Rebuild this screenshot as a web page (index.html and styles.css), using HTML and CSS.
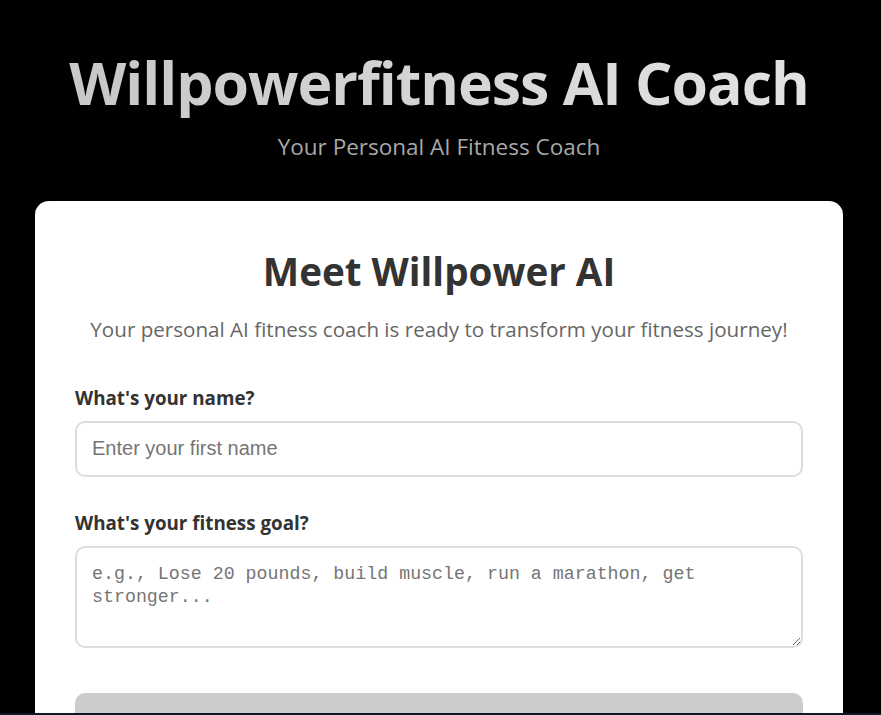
FILE: index.html
```html
<!DOCTYPE html>
<html lang="en">
<head>
<meta charset="utf-8">
<title>Willpowerfitness AI Coach</title>
<link rel="stylesheet" href="styles.css">
</head>
<body>
<div class="page">
  <header class="hero">
    <h1 class="hero-title">Willpowerfitness AI Coach</h1>
    <p class="hero-sub">Your Personal AI Fitness Coach</p>
  </header>
  <main class="card">
    <h2 class="card-title">Meet Willpower AI</h2>
    <p class="card-intro">Your personal AI fitness coach is ready to transform your fitness journey!</p>
    <div class="field">
      <label class="field-label" for="name">What's your name?</label>
      <input class="field-input" id="name" type="text" placeholder="Enter your first name">
    </div>
    <div class="field">
      <label class="field-label" for="goal">What's your fitness goal?</label>
      <textarea class="field-textarea" id="goal" rows="3" placeholder="e.g., Lose 20 pounds, build muscle, run a marathon, get stronger..."></textarea>
    </div>
    <button class="start-btn" type="button" disabled>Start My Fitness Journey</button>
  </main>
</div>
<div class="bottom-strip"></div>
</body>
</html>
```

FILE: styles.css
```css
* { box-sizing: border-box; }
html, body { margin: 0; padding: 0; }
body {
  background: #000;
  font-family: "Open Sans", "Noto Sans", sans-serif;
  overflow: hidden;
}
.page {
  padding: 0 38px 0 35px;
}
.hero {
  text-align: center;
  padding-top: 47px;
  padding-bottom: 39px;
}
.hero-title {
  margin: 0;
  font-size: 59px;
  font-weight: 700;
  line-height: 1.2;
  letter-spacing: -1.05px;
  background: linear-gradient(90deg, #c6c6c6, #e4e4e4);
  -webkit-background-clip: text;
  background-clip: text;
  color: transparent;
}
.hero-sub {
  margin: 13px 0 0;
  font-size: 22.5px;
  color: #a8a8a8;
}
.card {
  background: #fff;
  border-radius: 14px;
  padding: 45px 40px 40px;
  min-height: 600px;
}
.card-title {
  margin: 0;
  text-align: center;
  font-size: 38.6px;
  font-weight: 700;
  color: #333;
  line-height: 1.3;
}
.card-intro {
  margin: 19px 0 0;
  text-align: center;
  font-size: 20.6px;
  color: #666;
}
.field {
  margin-top: 42px;
  display: flex;
  flex-direction: column;
  gap: 10px;
}
.field + .field { margin-top: 33px; }
.field-label {
  font-size: 18.8px;
  font-weight: 700;
  color: #333;
}
.field-input,
.field-textarea {
  width: 100%;
  border: 2px solid #ddd;
  border-radius: 10px;
  background: #fff;
  color: #333;
  padding: 14px 15px;
  font-size: 20px;
}
.field-input {
  height: 56px;
  font-family: "Liberation Sans", Arial, sans-serif;
}
.field-textarea {
  height: 102px;
  font-family: "Liberation Mono", monospace;
  font-size: 18.3px;
  line-height: 23.5px;
  padding: 15px 15px 12px;
  resize: vertical;
}
.field-input::placeholder,
.field-textarea::placeholder { color: #757575; }
.start-btn {
  display: block;
  width: 100%;
  margin-top: 45px;
  height: 68px;
  border: none;
  border-radius: 10px;
  background: #ccc;
  color: #fff;
  font-size: 20px;
  line-height: 1.2;
  font-weight: 700;
  font-family: inherit;
}
.bottom-strip {
  position: fixed;
  left: 0;
  right: 0;
  bottom: 0;
  height: 2px;
  background: #0f172a;
}
```
